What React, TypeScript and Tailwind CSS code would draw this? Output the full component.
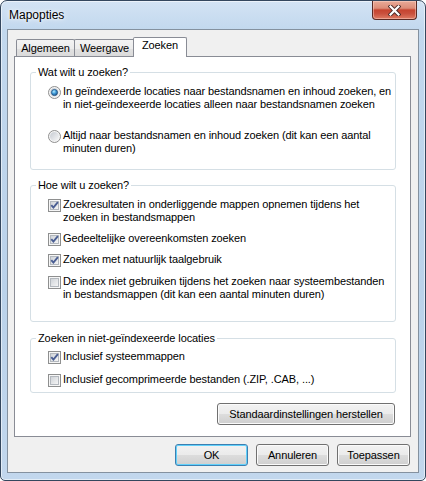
import React from "react";

function Radio({ checked }: { checked?: boolean }) {
  return (
    <svg width="13" height="13" viewBox="0 0 13 13">
      <defs>
        <linearGradient id="rbg" x1="0" y1="0" x2="1" y2="1">
          <stop offset="0" stopColor="#c6cbd2" />
          <stop offset="1" stopColor="#f8f8f8" />
        </linearGradient>
        <radialGradient id="rdot" cx="0.4" cy="0.35" r="0.75">
          <stop offset="0" stopColor="#b4ecff" />
          <stop offset="0.45" stopColor="#3f9ad8" />
          <stop offset="1" stopColor="#15457a" />
        </radialGradient>
      </defs>
      <circle cx="6.5" cy="6.5" r="6" fill="#f5f5f5" stroke="#8f8f8f" />
      <circle cx="6.5" cy="6.5" r="4.5" fill="url(#rbg)" />
      {checked && <circle cx="6.5" cy="6.5" r="3.1" fill="url(#rdot)" stroke="#1b4a7a" strokeWidth="0.7" />}
    </svg>
  );
}

function Check({ checked }: { checked?: boolean }) {
  return (
    <svg width="13" height="13" viewBox="0 0 13 13">
      <defs>
        <linearGradient id="cbg" x1="0" y1="0" x2="1" y2="1">
          <stop offset="0" stopColor="#cdd1d6" />
          <stop offset="1" stopColor="#f7f7f7" />
        </linearGradient>
      </defs>
      <rect x="0.5" y="0.5" width="12" height="12" fill="#f6f6f6" stroke="#8e8f8f" />
      <rect x="2.5" y="2.5" width="8" height="8" fill="url(#cbg)" stroke="#b3b8be" />
      {checked && (
        <path d="M3.3 6.2 L5.4 8.6 L9.9 3.1" fill="none" stroke="#4a5e93" strokeWidth="1.9" strokeLinejoin="miter" />
      )}
    </svg>
  );
}

function Item({
  kind,
  checked,
  lines,
  className = "",
}: {
  kind: "radio" | "check";
  checked?: boolean;
  lines: string[];
  className?: string;
}) {
  return (
    <div className={"flex items-start " + className}>
      <div className="ml-[17px] mt-[1px] w-[13px] h-[13px] shrink-0">
        {kind === "radio" ? <Radio checked={checked} /> : <Check checked={checked} />}
      </div>
      <div className="ml-[2px] whitespace-nowrap">
        {lines.map((l, i) => (
          <div key={i}>{l}</div>
        ))}
      </div>
    </div>
  );
}

function Group({
  title,
  className = "",
  children,
}: {
  title: string;
  className?: string;
  children: React.ReactNode;
}) {
  return (
    <div className={"relative border border-[#d5dfe5] rounded-[3px] flex flex-col shrink-0 " + className}>
      <div className="absolute top-[-7px] left-[5px] bg-white px-[2px] whitespace-nowrap">{title}</div>
      {children}
    </div>
  );
}

const btn =
  "h-[22px] w-[73px] rounded-[3px] border flex items-center justify-center bg-[linear-gradient(to_bottom,#f2f2f2_0%,#ebebeb_50%,#dddddd_50%,#cfcfcf_100%)]";

export default function App() {
  return (
    <div className="w-[426px] h-[481px] bg-white font-['Liberation_Sans',Arial,sans-serif] text-[11px] leading-[13px] tracking-[-0.1px] text-black">
      <div className="w-full h-full rounded-t-[7px] rounded-b-[5px] border border-[#34475e] px-[6px] flex flex-col bg-[linear-gradient(to_bottom,#d3e3f4_0%,#c2d8ee_6%,#bad2ea_60%,#c2d7ed_100%)] shadow-[inset_0_0_0_1px_rgba(255,255,255,0.55)]">
        {/* Title bar */}
        <div className="h-[28px] flex items-start shrink-0">
          <div className="pt-[7px] pl-[2px] text-[12px] leading-[14px] tracking-normal [text-shadow:0_0_6px_#ffffff,0_0_3px_#ffffff]">
            Mapopties
          </div>
          <div className="ml-auto mr-[2px] w-[45px] h-[19px] rounded-b-[4px] border border-t-0 border-[#5a2a24] flex items-center justify-center bg-[linear-gradient(to_bottom,#e9ab98_0%,#dc8c78_40%,#c6442f_50%,#c9503d_70%,#de7b63_100%)] shadow-[inset_0_0_0_1px_rgba(255,220,210,0.45)]">
            <svg width="13" height="11" viewBox="0 0 13 11">
              <path d="M2.5 1.5 L10.5 9.5 M10.5 1.5 L2.5 9.5" stroke="#4a2a28" strokeWidth="4" strokeLinecap="square" />
              <path d="M2.5 1.5 L10.5 9.5 M10.5 1.5 L2.5 9.5" stroke="#ffffff" strokeWidth="2.2" strokeLinecap="square" />
            </svg>
          </div>
        </div>

        {/* Client area */}
        <div className="h-[444px] shrink-0 border border-[#84919f] bg-[#f0f0f0] pl-[6px] pr-[7px] pt-[7px] flex flex-col">
          {/* Tabs */}
          <div className="h-[20px] flex items-end pl-[2px] shrink-0">
            <div className="h-[18px] w-[59px] border border-b-0 border-[#898c95] rounded-t-[2px] flex items-center justify-center bg-[linear-gradient(to_bottom,#f3f3f3_0%,#ececec_50%,#e1e1e1_50%,#dadada_100%)]">
              Algemeen
            </div>
            <div className="h-[18px] w-[61px] -ml-px border border-b-0 border-[#898c95] rounded-t-[2px] flex items-center justify-center bg-[linear-gradient(to_bottom,#f3f3f3_0%,#ececec_50%,#e1e1e1_50%,#dadada_100%)]">
              Weergave
            </div>
            <div className="relative z-10 h-[20px] w-[54px] -ml-[2px] border border-b-0 border-[#898c95] rounded-t-[2px] bg-white flex justify-center pt-[1px]">
              Zoeken
            </div>
          </div>

          {/* Panel */}
          <div className="-mt-px h-[381px] shrink-0 border border-[#898c95] bg-white pl-[15px] pr-[14px] pt-[15px] flex flex-col">
            <Group title="Wat wilt u zoeken?" className="h-[98px] pt-[12px]">
              <Item
                kind="radio"
                checked
                lines={[
                  "In geïndexeerde locaties naar bestandsnamen en inhoud zoeken, en",
                  "in niet-geïndexeerde locaties alleen naar bestandsnamen zoeken",
                ]}
              />
              <Item
                kind="radio"
                className="mt-[18px]"
                lines={["Altijd naar bestandsnamen en inhoud zoeken (dit kan een aantal", "minuten duren)"]}
              />
            </Group>

            <Group title="Hoe wilt u zoeken?" className="mt-[15px] h-[137px] pt-[12px]">
              <Item
                kind="check"
                checked
                lines={["Zoekresultaten in onderliggende mappen opnemen tijdens het", "zoeken in bestandsmappen"]}
              />
              <Item kind="check" checked className="mt-[8px]" lines={["Gedeeltelijke overeenkomsten zoeken"]} />
              <Item kind="check" checked className="mt-[7px]" lines={["Zoeken met natuurlijk taalgebruik"]} />
              <Item
                kind="check"
                className="mt-[8px]"
                lines={[
                  "De index niet gebruiken tijdens het zoeken naar systeembestanden",
                  "in bestandsmappen (dit kan een aantal minuten duren)",
                ]}
              />
            </Group>

            <Group title="Zoeken in niet-geïndexeerde locaties" className="mt-[16px] h-[55px] pt-[11px]">
              <Item kind="check" checked lines={["Inclusief systeemmappen"]} />
              <Item kind="check" className="mt-[9px]" lines={["Inclusief gecomprimeerde bestanden (.ZIP, .CAB, ...)"]} />
            </Group>

            <div className="mt-[10px] self-end mr-px">
              <div className={btn + " w-[178px] border-[#707070] shadow-[inset_0_0_0_1px_#fbfbfb]"} style={{ width: 178 }}>
                Standaardinstellingen herstellen
              </div>
            </div>
          </div>

          {/* Bottom buttons */}
          <div className="mt-[7px] flex justify-end gap-[8px] mr-px">
            <div className={btn + " border-[#3c7fb1] shadow-[inset_0_0_0_1px_#62d1fb]"}>OK</div>
            <div className={btn + " border-[#707070] shadow-[inset_0_0_0_1px_#fbfbfb]"}>Annuleren</div>
            <div className={btn + " border-[#707070] shadow-[inset_0_0_0_1px_#fbfbfb]"}>Toepassen</div>
          </div>
        </div>
      </div>
    </div>
  );
}
